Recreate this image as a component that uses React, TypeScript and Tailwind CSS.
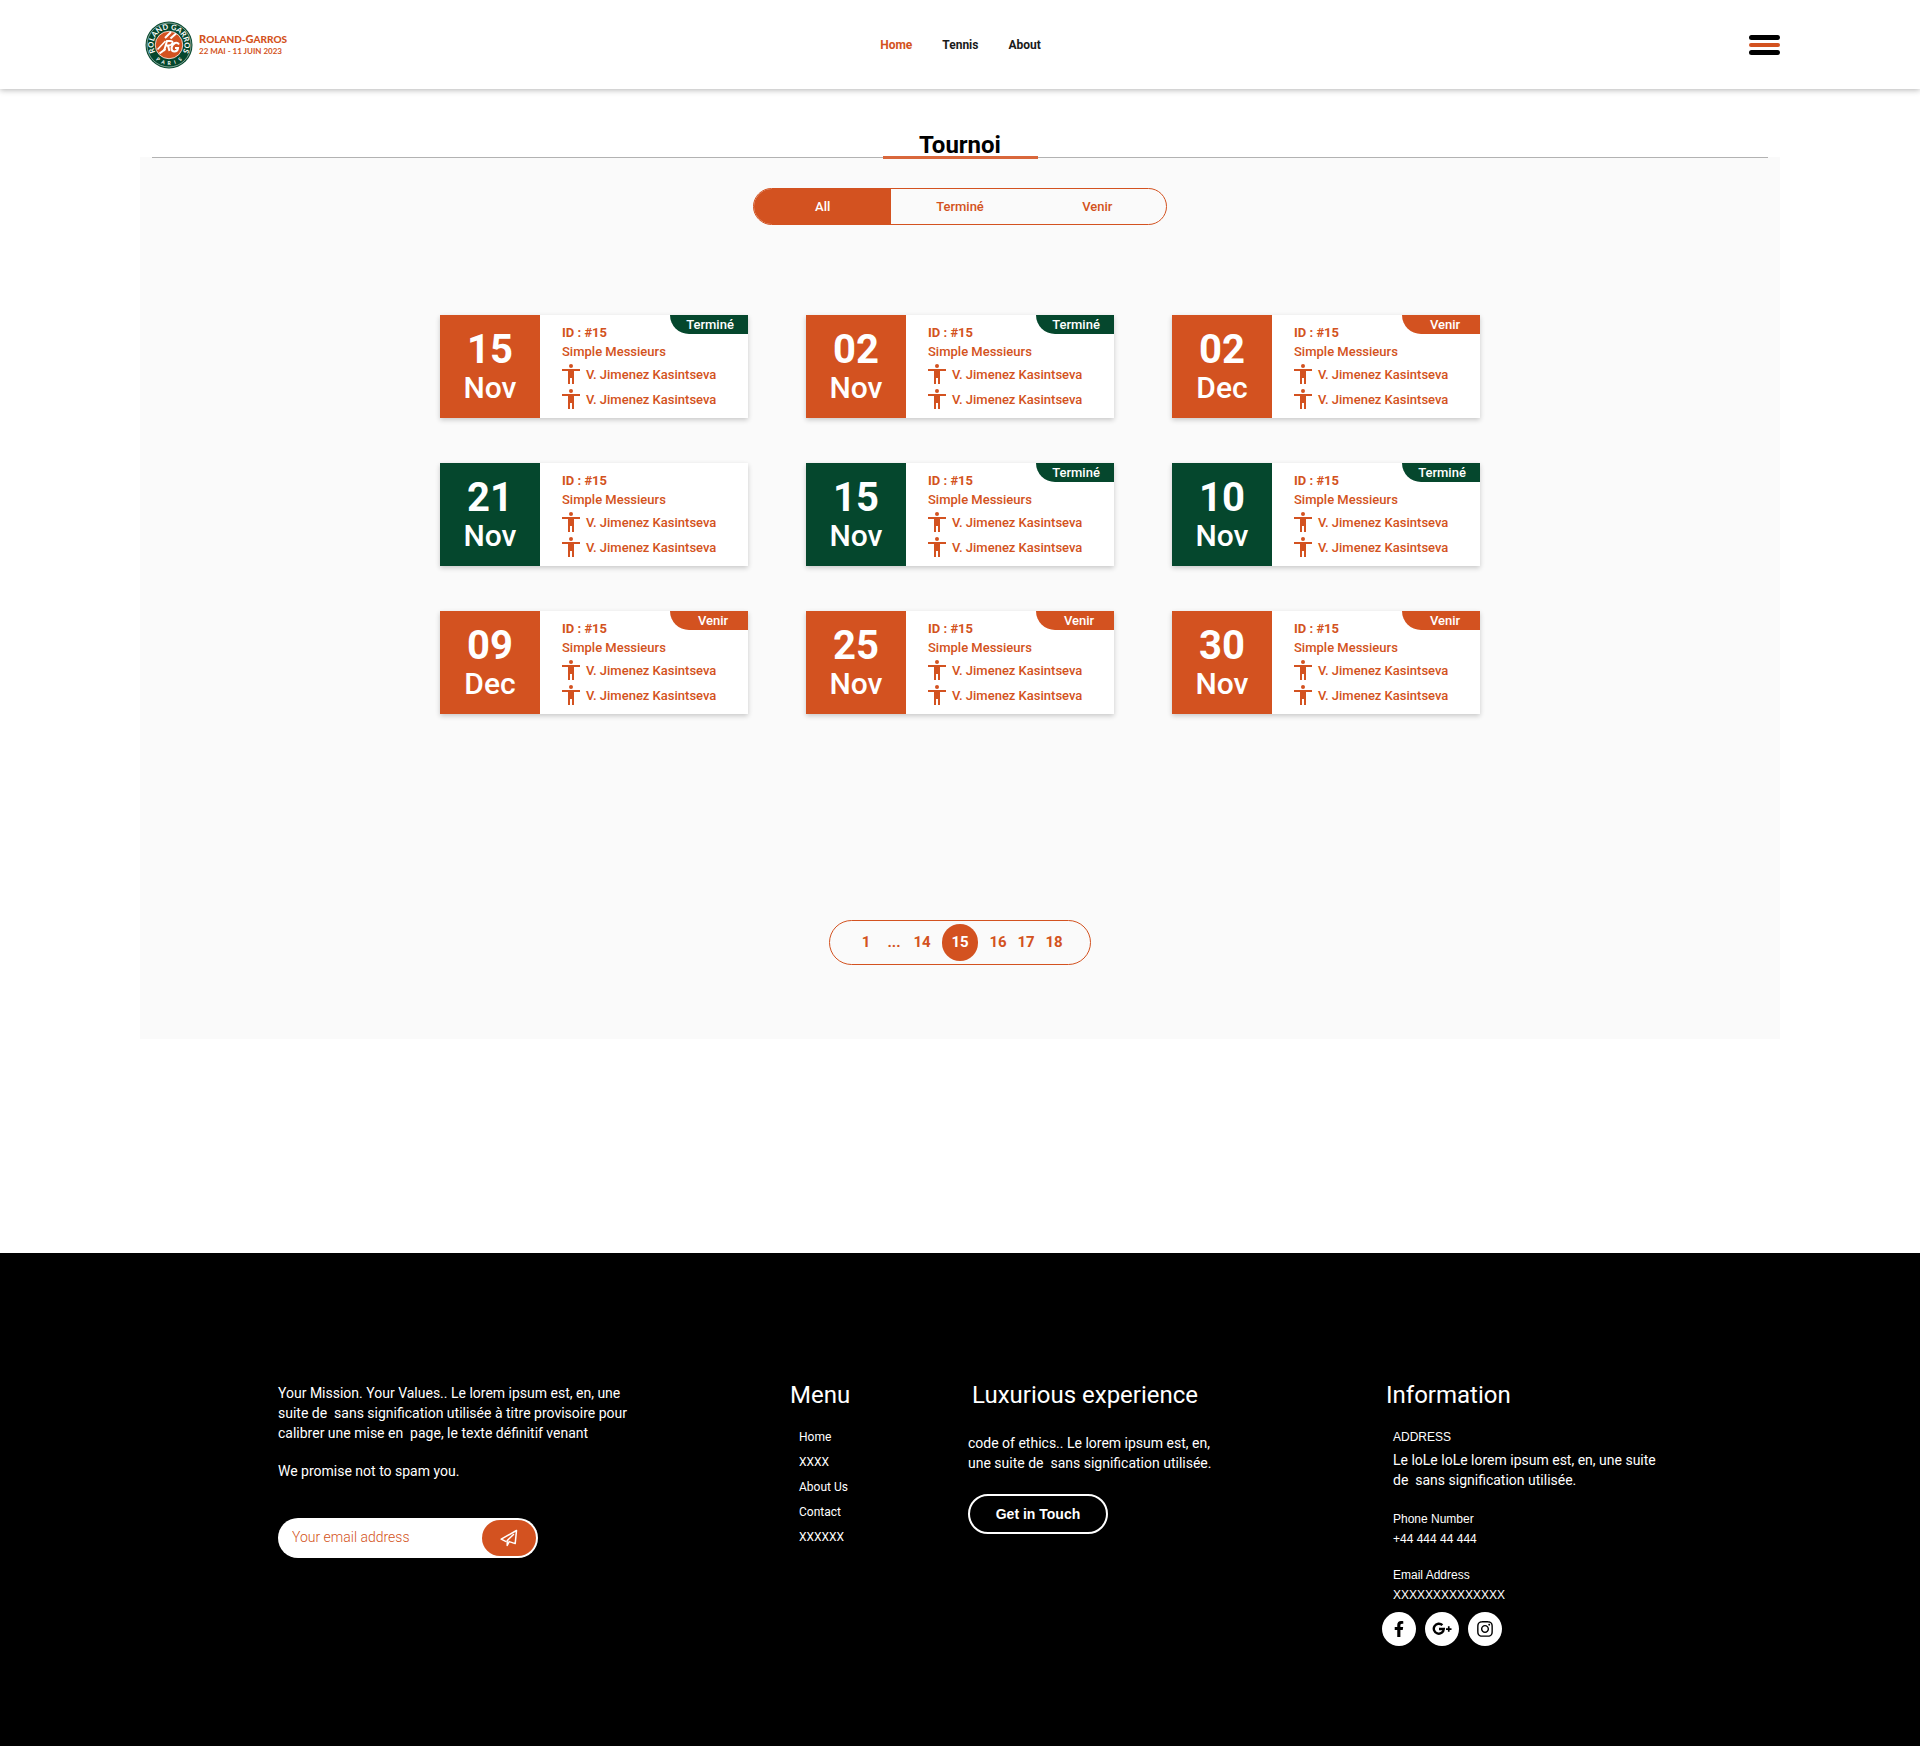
import { useState } from "react";
import { FaFacebookF, FaInstagram } from "react-icons/fa";

type Status = "Terminé" | "Venir";

type Match = {
  day: string;
  month: string;
  green?: boolean;
  status?: Status;
};

const matches: Match[] = [
  { day: "15", month: "Nov", status: "Terminé" },
  { day: "02", month: "Nov", status: "Terminé" },
  { day: "02", month: "Dec", status: "Venir" },
  { day: "21", month: "Nov", green: true },
  { day: "15", month: "Nov", green: true, status: "Terminé" },
  { day: "10", month: "Nov", green: true, status: "Terminé" },
  { day: "09", month: "Dec", status: "Venir" },
  { day: "25", month: "Nov", status: "Venir" },
  { day: "30", month: "Nov", status: "Venir" },
];

function Logo() {
  return (
    <a href="#" className="flex items-center gap-1.5 pl-[5px] text-[#d35220]" aria-label="Roland-Garros">
      <svg viewBox="0 0 96 96" className="size-12" aria-hidden="true">
        <defs>
          <path id="ring-top" d="M 23.6 66.8 A 31 31 0 1 1 72.4 66.8" />
          <path id="ring-bottom" d="M 10 60 A 40 40 0 0 0 86 60" />
        </defs>
        <circle cx="48" cy="48" r="47" fill="#05472d" />
        <circle cx="48" cy="48" r="44" fill="none" stroke="#fff" strokeWidth="1" />
        <circle cx="48" cy="48" r="27.5" fill="#d35220" stroke="#fff" strokeWidth="1.5" />
        <text fill="#fff" fontFamily="Lato, sans-serif" fontSize="15" fontWeight="700">
          <textPath href="#ring-top" startOffset="50%" textAnchor="middle">
            ROLAND GARROS
          </textPath>
        </text>
        <g fill="#fff" fontFamily="Lato, sans-serif" fontSize="10" fontWeight="700" textAnchor="middle">
          {["P", "A", "R", "I", "S"].map((letter, i) => (
            <text key={i}>
              <textPath href="#ring-bottom" startOffset={`${24 + i * 13}%`}>
                {letter}
              </textPath>
            </text>
          ))}
        </g>
        <g fill="none" stroke="#fff" strokeLinecap="butt">
          <path d="M38 60 L44 40 H50 Q56 40 55 44 Q53 49 46 49 H41" strokeWidth="4" />
          <path d="M46 49 L49 60" strokeWidth="4" />
          <path d="M68 47 Q65 42 60 44 Q54 47 53 54 Q53 61 59 61 Q65 61 66 54 H60" strokeWidth="4" />
          <path d="M25 57 L41 40" strokeWidth="3" />
          <path d="M29 65 L41 56" strokeWidth="4" />
          <path d="M40 34 L52 22" strokeWidth="4" />
          <path d="M51 35 L62 25" strokeWidth="4" />
        </g>
      </svg>
      <span className="flex flex-col font-[Lato,sans-serif] leading-3 whitespace-nowrap">
        <span className="text-[10px] font-black">
          <span className="text-[11px]">R</span>OLAND-<span className="text-[11px]">G</span>ARROS
        </span>
        <span className="text-[8px] font-bold">22 MAI - 11 JUIN 2023</span>
      </span>
    </a>
  );
}

function Player() {
  return (
    <li className="flex h-[25px] items-center gap-1.5">
      <svg viewBox="0 0 18 20" className="h-5 w-[18px]" fill="currentColor" aria-hidden="true">
        <circle cx="9" cy="2" r="2" />
        <path d="M0 5H18V7H12V20H10V14H8V20H6V7H0Z" />
      </svg>
      <span className="pt-0.5">V. Jimenez Kasintseva</span>
    </li>
  );
}

function MatchCard({ match }: { match: Match }) {
  return (
    <article className="relative flex h-[103px] bg-white text-[13px] font-medium text-[#d35220] shadow-[0_2px_5px_rgba(0,0,0,0.2)]">
      <div
        className={`flex w-[100px] shrink-0 flex-col items-center justify-center pt-0.5 text-white ${
          match.green ? "bg-[#05472d]" : "bg-[#d35220]"
        }`}
      >
        <span className="text-[40px] leading-10 font-bold">{match.day}</span>
        <span className="text-[30px] leading-9 font-medium">{match.month}</span>
      </div>
      <div className="pt-2 pl-[22px]">
        <p className="leading-[19px] font-bold">ID : #15</p>
        <p className="leading-[19px]">Simple Messieurs</p>
        <ul className="whitespace-nowrap">
          <Player />
          <Player />
        </ul>
      </div>
      {match.status && (
        <span
          className={`absolute top-0 right-0 flex h-[19px] w-[78px] items-center justify-center rounded-bl-[19px] text-white ${
            match.status === "Venir" ? "bg-[#d35220] pl-2" : "bg-[#05472d] pl-0.5"
          }`}
        >
          {match.status}
        </span>
      )}
    </article>
  );
}

function GooglePlus() {
  return (
    <svg viewBox="0 0 20 14" className="h-3.5 w-5" aria-hidden="true">
      <path
        d="M10.4 3.2A5 5 0 1 0 11.8 7H7"
        fill="none"
        stroke="currentColor"
        strokeWidth="2.4"
      />
      <path d="M14 6.2h1.9V4.3h1.7v1.9h1.9v1.7h-1.9v1.9h-1.7V7.9H14z" fill="currentColor" />
    </svg>
  );
}

function PaperPlane() {
  return (
    <svg viewBox="0 0 18 18" className="size-[18px]" fill="none" stroke="currentColor" strokeWidth="1.5" strokeLinejoin="round" strokeLinecap="round" aria-hidden="true">
      <path d="M16.5 1.5 1.2 10.2 5.6 12.4M16.5 1.5 15.2 14.6 9.2 12.6M13.5 5.5 7.2 11.6V16.4L9.2 12.6" />
    </svg>
  );
}

const filters = ["All", "Terminé", "Venir"];
const pages = ["14", "15", "16", "17", "18"];
const social = [
  { name: "Facebook", icon: <FaFacebookF className="size-4" /> },
  { name: "Google Plus", icon: <GooglePlus /> },
  { name: "Instagram", icon: <FaInstagram className="size-[18px]" /> },
];

export default function App() {
  const [filter, setFilter] = useState("All");
  const [page, setPage] = useState("15");

  return (
    <div className="bg-white font-[Roboto,sans-serif] text-black">
      <header className="relative h-[89px] bg-white px-[140px] shadow-[0_1px_6px_rgba(0,0,0,0.3)]">
        <div className="grid h-full grid-cols-[1fr_auto_1fr] items-center">
          <Logo />
          <nav className="flex gap-[30px] pt-px pl-px text-xs font-bold text-[#1a1a1a]">
            <a href="#" className="text-[#d35220]">Home</a>
            <a href="#">Tennis</a>
            <a href="#">About</a>
          </nav>
          <button type="button" aria-label="Open menu" className="flex w-[31px] flex-col gap-[3px] justify-self-end">
            <span className="h-[5px] rounded-full bg-black" />
            <span className="h-1 rounded-full bg-[#d35220]" />
            <span className="h-[5px] rounded-full bg-black" />
          </button>
        </div>
      </header>

      <main className="px-[140px] pt-11 pb-[214px]">
        <h1 className="text-center text-2xl leading-6 font-bold">Tournoi</h1>
        <section className="flex flex-col items-center bg-[#fafafa] pb-[74px]">
          <div className="flex w-full items-center px-3">
            <div className="h-px flex-1 bg-[#b2b2b2]" />
            <div className="-my-px h-[3px] w-[155px] bg-[#d9673b]" />
            <div className="h-px flex-1 bg-[#b2b2b2]" />
          </div>

          <div className="mt-[30px] grid h-[37px] w-[414px] grid-cols-3 overflow-hidden rounded-full border border-[#d35220] text-[13px] font-medium">
            {filters.map((name) => (
              <button
                key={name}
                type="button"
                aria-pressed={filter === name}
                onClick={() => setFilter(name)}
                className={filter === name ? "bg-[#d35220] text-white" : "text-[#d35220]"}
              >
                {name}
              </button>
            ))}
          </div>

          <div className="mt-[90px] grid grid-cols-[repeat(3,308px)] gap-x-[58px] gap-y-[45px]">
            {matches.map((match, i) => (
              <MatchCard key={i} match={match} />
            ))}
          </div>

          <nav
            aria-label="Pagination"
            className="mt-[206px] flex h-[45px] w-[262px] items-center justify-center rounded-full border border-[#d35220] text-[15px] font-bold text-[#d35220]"
          >
            <button type="button" className="w-7">1</button>
            <span className="w-7 text-center">...</span>
            {pages.map((n) => (
              <button
                key={n}
                type="button"
                aria-current={page === n ? "page" : undefined}
                onClick={() => setPage(n)}
                className={
                  page === n
                    ? "mx-1.5 h-[37px] w-9 rounded-full bg-[#d35220] text-white"
                    : "w-7"
                }
              >
                {n}
              </button>
            ))}
          </nav>
        </section>
      </main>

      <footer className="grid grid-cols-[512fr_178fr_414fr_278fr] bg-black pt-[126px] pr-[260px] pb-[100px] pl-[278px] text-sm leading-5 text-white">
        <div className="pt-1">
          <p>
            Your Mission. Your Values.. Le lorem ipsum est, en, une
            <br />
            suite de&nbsp; sans signification utilisée à titre provisoire pour
            <br />
            calibrer une mise en&nbsp; page, le texte définitif venant
          </p>
          <p className="mt-[18px]">We promise not to spam you.</p>
          <form
            onSubmit={(e) => e.preventDefault()}
            className="mt-[37px] flex h-10 w-[260px] items-center rounded-full bg-white p-0.5"
          >
            <input
              type="email"
              aria-label="Your email address"
              placeholder="Your email address"
              className="h-full min-w-0 flex-1 bg-transparent pb-0.5 pl-3 font-light text-[#d35220] outline-none placeholder:text-[#d35220]"
            />
            <button type="submit" aria-label="Subscribe" className="flex h-9 w-[54px] items-center justify-center rounded-full bg-[#d35220]">
              <PaperPlane />
            </button>
          </form>
        </div>

        <div>
          <h2 className="text-2xl leading-8">Menu</h2>
          <ul className="mt-3.5 pl-[9px] text-xs leading-[25px]">
            {["Home", "XXXX", "About Us", "Contact", "XXXXXX"].map((item) => (
              <li key={item}>
                <a href="#">{item}</a>
              </li>
            ))}
          </ul>
        </div>

        <div>
          <h2 className="pl-1 text-2xl leading-8">Luxurious experience</h2>
          <p className="mt-[22px]">
            code of ethics.. Le lorem ipsum est, en,
            <br />
            une suite de&nbsp; sans signification utilisée.
          </p>
          <button
            type="button"
            className="mt-[21px] h-10 w-[140px] rounded-full border-2 border-white font-['Liberation_Sans',sans-serif] font-bold"
          >
            Get in Touch
          </button>
        </div>

        <div>
          <h2 className="pl-1 text-2xl leading-8">Information</h2>
          <div className="pl-[11px] font-['Liberation_Sans',sans-serif] text-xs leading-5 whitespace-nowrap">
            <h3 className="mt-4">ADDRESS</h3>
            <p className="mt-[3px] font-[Roboto,sans-serif] text-sm leading-5">
              Le loLe loLe lorem ipsum est, en, une suite
              <br />
              de&nbsp; sans signification utilisée.
            </p>
            <h3 className="mt-[19px]">Phone Number</h3>
            <p>+44 444 44 444</p>
            <h3 className="mt-4">Email Address</h3>
            <p>XXXXXXXXXXXXXX</p>
          </div>
          <div className="mt-[7px] flex gap-[9px]">
            {social.map((s) => (
              <a
                key={s.name}
                href="#"
                aria-label={s.name}
                className="flex size-[34px] items-center justify-center rounded-full bg-white text-black"
              >
                {s.icon}
              </a>
            ))}
          </div>
        </div>
      </footer>
    </div>
  );
}
